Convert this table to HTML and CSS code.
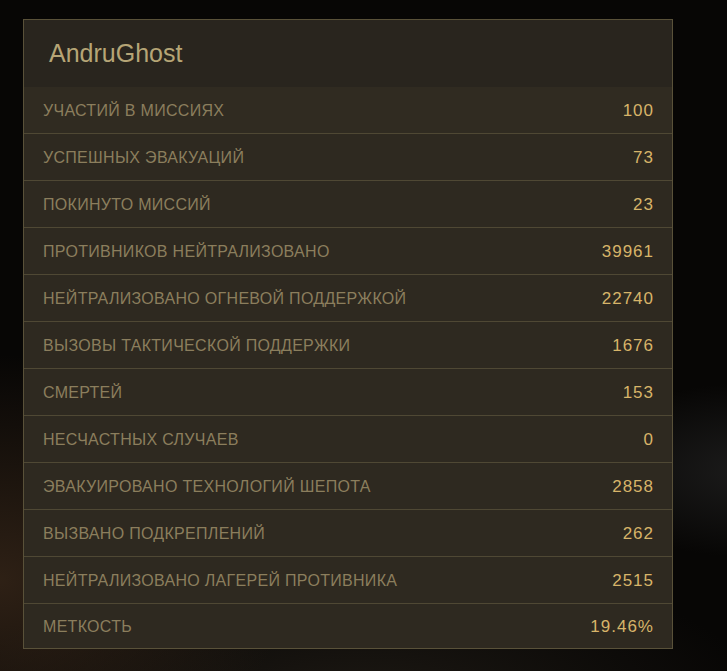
FILE: index.html
```html
<!DOCTYPE html>
<html lang="ru">
<head>
<meta charset="utf-8">
<link rel="stylesheet" href="styles.css">
</head>
<body>
<div class="panel">
  <div class="header">AndruGhost</div>
  <div class="row first"><span class="label">Участий в миссиях</span><span class="value">100</span></div>
  <div class="row"><span class="label">Успешных эвакуаций</span><span class="value">73</span></div>
  <div class="row"><span class="label">Покинуто миссий</span><span class="value">23</span></div>
  <div class="row"><span class="label">Противников нейтрализовано</span><span class="value">39961</span></div>
  <div class="row"><span class="label">Нейтрализовано огневой поддержкой</span><span class="value">22740</span></div>
  <div class="row"><span class="label">Вызовы тактической поддержки</span><span class="value">1676</span></div>
  <div class="row"><span class="label">Смертей</span><span class="value">153</span></div>
  <div class="row"><span class="label">Несчастных случаев</span><span class="value">0</span></div>
  <div class="row"><span class="label">Эвакуировано технологий шепота</span><span class="value">2858</span></div>
  <div class="row"><span class="label">Вызвано подкреплений</span><span class="value">262</span></div>
  <div class="row"><span class="label">Нейтрализовано лагерей противника</span><span class="value">2515</span></div>
  <div class="row last"><span class="label">Меткость</span><span class="value">19.46%</span></div>
</div>
</body>
</html>
```
FILE: styles.css
```css
html, body {
  margin: 0;
  height: 100%;
}
body {
  background:
    radial-gradient(ellipse 380px 300px at 0px 580px, rgba(72, 50, 32, 0.6), rgba(0,0,0,0) 75%),
    radial-gradient(ellipse 240px 110px at 760px 470px, rgba(38, 38, 38, 0.7), rgba(0,0,0,0) 80%),
    radial-gradient(ellipse 500px 180px at 360px 700px, rgba(42, 36, 28, 0.6), rgba(0,0,0,0) 80%),
    #070605;
  padding: 19px 0 0 23px;
  box-sizing: border-box;
  font-family: "Liberation Sans", Arial, sans-serif;
  overflow: hidden;
}
.panel {
  width: 650px;
  box-sizing: border-box;
  border: 1px solid #595139;
  background: #2d2820;
}
.header {
  height: 67px;
  background: #29251e;
  color: #b6a576;
  font-size: 25px;
  padding-left: 25px;
  display: flex;
  align-items: center;
  padding-bottom: 1px;
  box-sizing: border-box;
}
.row {
  height: 47px;
  box-sizing: border-box;
  border-top: 1px solid #4f4834;
  display: flex;
  align-items: center;
  justify-content: space-between;
  padding: 1px 19px 0 19px;
  background: #2e2920;
}
.row.first {
  border-top: none;
  height: 46px;
  background: #302b21;
}
.row.last {
  height: 45px;
}
.label {
  text-transform: uppercase;
  color: #8b7e5d;
  font-size: 16px;
  letter-spacing: 0.3px;
}
.value {
  color: #d7b469;
  font-size: 17px;
  letter-spacing: 1px;
  margin-right: -1px;
}
```
